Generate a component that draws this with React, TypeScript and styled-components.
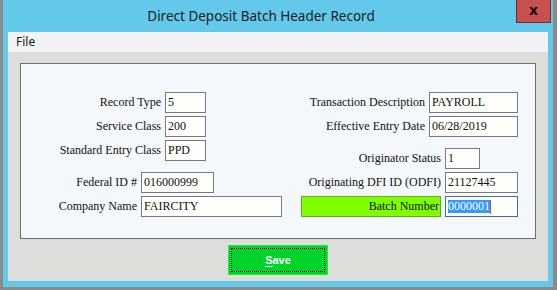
import styled, { createGlobalStyle } from "styled-components";

const GlobalStyle = createGlobalStyle`
  html, body {
    margin: 0;
    padding: 0;
    background: #ffffff;
  }
  * {
    box-sizing: border-box;
  }
`;

const leftRows = [
  { label: "Record Type", value: "5", labelWidth: 140, boxWidth: 41 },
  { label: "Service Class", value: "200", labelWidth: 140, boxWidth: 41 },
  { label: "Standard Entry Class", value: "PPD", labelWidth: 140, boxWidth: 41 },
  { label: "Federal ID #", value: "016000999", labelWidth: 116, boxWidth: 73, spaced: true },
  { label: "Company Name", value: "FAIRCITY", labelWidth: 116, boxWidth: 141 },
];

const rightRows = [
  { label: "Transaction Description", value: "PAYROLL", labelWidth: 135, boxWidth: 89 },
  { label: "Effective Entry Date", value: "06/28/2019", labelWidth: 135, boxWidth: 89 },
  { label: "Originator Status", value: "1", labelWidth: 151, boxWidth: 35, spaced: true },
  { label: "Originating DFI ID (ODFI)", value: "21127445", labelWidth: 151, boxWidth: 73 },
];

const App = () => {
  return (
    <>
      <GlobalStyle />
      <Window>
        <TitleBar>
          <Title>Direct Deposit Batch Header Record</Title>
          <CloseButton>x</CloseButton>
        </TitleBar>
        <Client>
          <MenuBar>
            <MenuItem>File</MenuItem>
          </MenuBar>
          <Content>
            <Panel>
              <Column>
                {leftRows.map((row) => (
                  <Field key={row.label} $spaced={row.spaced}>
                    <Label $width={row.labelWidth}>{row.label}</Label>
                    <TextBox $width={row.boxWidth}>{row.value}</TextBox>
                  </Field>
                ))}
              </Column>
              <Column>
                {rightRows.map((row) => (
                  <Field key={row.label} $spaced={row.spaced}>
                    <Label $width={row.labelWidth}>{row.label}</Label>
                    <TextBox $width={row.boxWidth}>{row.value}</TextBox>
                  </Field>
                ))}
                <Field>
                  <BatchLabel>Batch Number</BatchLabel>
                  <TextBox $width={73} $focused>
                    <Selected>0000001</Selected>
                    <Caret />
                  </TextBox>
                </Field>
              </Column>
            </Panel>
            <SaveButton>
              <FocusRect>
                <Mnemonic>S</Mnemonic>ave
              </FocusRect>
            </SaveButton>
          </Content>
        </Client>
      </Window>
    </>
  );
};

const Window = styled.div`
  width: 557px;
  height: 290px;
  display: flex;
  flex-direction: column;
  background: #62c9ea;
  border-left: 3px solid #8a8a8a;
  border-right: 4px solid #8a8a8a;
  border-bottom: 3px solid #8a8a8a;
`;

const TitleBar = styled.div`
  position: relative;
  height: 32px;
  flex-shrink: 0;
  display: flex;
  align-items: center;
  justify-content: center;
  padding-right: 34px;
`;

const Title = styled.div`
  font-family: "Noto Sans", "Open Sans", sans-serif;
  font-size: 13.5px;
  color: #1b1b1b;
  margin-top: -1px;
`;

const CloseButton = styled.div`
  position: absolute;
  top: 0;
  right: 2px;
  width: 35px;
  height: 23px;
  background: #c75050;
  border: 1px solid #6e2b2b;
  border-top: none;
  display: flex;
  align-items: center;
  justify-content: center;
  font-family: "DejaVu Sans", sans-serif;
  font-weight: 700;
  font-size: 14px;
  line-height: 1;
  color: #111111;
  padding-bottom: 3px;
`;

const Client = styled.div`
  margin: 0 5px;
  height: 249px;
  background: #dcdedb;
  display: flex;
  flex-direction: column;
`;

const MenuBar = styled.div`
  height: 20px;
  background: #f2f1f4;
  display: flex;
  align-items: center;
  padding-left: 8px;
`;

const MenuItem = styled.span`
  font-family: "Noto Sans", sans-serif;
  font-size: 12px;
  color: #1a1a1a;
  margin-top: -1px;
`;

const Content = styled.div`
  flex: 1;
  display: flex;
  flex-direction: column;
  align-items: center;
  padding: 11px 12px 0;
  gap: 6px;
`;

const Panel = styled.div`
  width: 516px;
  height: 176px;
  background: #f4f8fb;
  border: 1px solid #6d6d6d;
  display: flex;
  padding-top: 28px;
`;

const Column = styled.div`
  display: flex;
  flex-direction: column;
  gap: 3px;

  &:first-child {
    width: 269px;
  }
`;

const Field = styled.div<{ $spaced?: boolean }>`
  display: flex;
  align-items: center;
  gap: 4px;
  height: 21px;
  margin-top: ${(p) => (p.$spaced ? "8px" : "0")};
`;

const Label = styled.div<{ $width: number }>`
  width: ${(p) => p.$width}px;
  text-align: right;
  font-family: "Liberation Serif", "Times New Roman", serif;
  font-size: 12px;
  color: #111111;
  white-space: nowrap;
`;

const BatchLabel = styled.div`
  width: 140px;
  height: 21px;
  margin-left: 11px;
  background: #80ff00;
  border: 1px solid #5fae1a;
  text-align: right;
  padding-right: 1px;
  font-family: "Liberation Serif", "Times New Roman", serif;
  font-size: 12px;
  line-height: 19px;
  color: #111111;
  white-space: nowrap;
`;

const TextBox = styled.div<{ $width: number; $focused?: boolean }>`
  width: ${(p) => p.$width}px;
  height: 21px;
  background: #fdfffb;
  border: 1px solid ${(p) => (p.$focused ? "#3d6e9e" : "#7a7a7a")};
  padding: 0 2px;
  display: flex;
  align-items: center;
  font-family: "Liberation Serif", "Times New Roman", serif;
  font-size: 12px;
  color: #111111;
  white-space: nowrap;
  overflow: hidden;
`;

const Selected = styled.span`
  background: #3399ff;
  color: #ffffff;
  line-height: 13px;
  height: 13px;
  display: inline-block;
`;

const Caret = styled.span`
  display: inline-block;
  width: 1px;
  height: 14px;
  background: #d35400;
`;

const SaveButton = styled.div`
  width: 100px;
  height: 30px;
  background: #00d42a;
  border: 1px solid #2ee82e;
  padding: 2px;
  flex-shrink: 0;
`;

const FocusRect = styled.div`
  width: 100%;
  height: 100%;
  border: 1px dotted #000000;
  display: flex;
  align-items: center;
  justify-content: center;
  font-family: "Liberation Sans", Arial, sans-serif;
  font-weight: 700;
  font-size: 11px;
  color: #ffffff;
`;

const Mnemonic = styled.span`
  text-decoration: underline;
  text-underline-offset: 2px;
`;

export default App;
